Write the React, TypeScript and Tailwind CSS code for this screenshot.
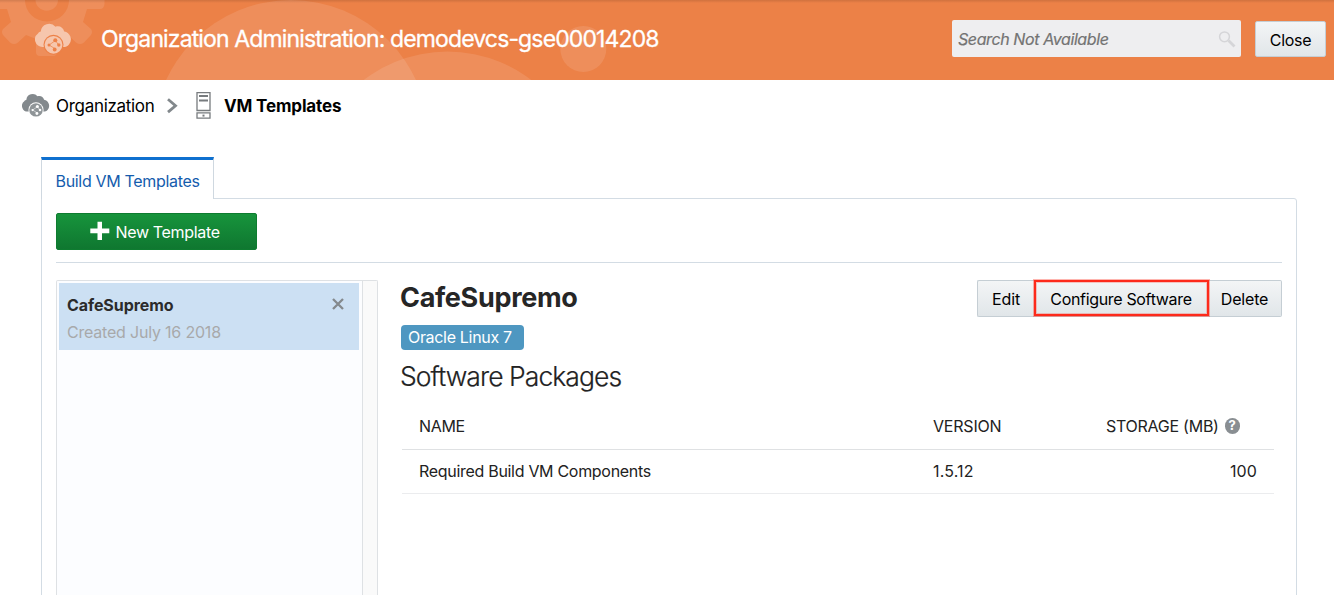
import type { ReactNode } from "react";

function HeaderArt() {
  return (
    <svg className="absolute inset-0" width="1334" height="80" viewBox="0 0 1334 80" aria-hidden="true">
      <g fill="#fff" fillOpacity="0.11">
        <circle cx="291" cy="137.6" r="137.6" />
        <circle cx="447.5" cy="189.1" r="137.6" />
        <circle cx="583.3" cy="49" r="23" />
        <path
          fillRule="evenodd"
          d="M-11 0V5Q-10 9 -6 9H7L11 22L3 29Q1 32 3 35L10 42.500Q14 45.500 18 42.500L26 35L36 39V52Q36 56 40 56H53Q57 56 57 52V39L68 35L76 42.500Q80 45.500 84 42.500L91 35Q93 32 91 29L83 22L87 9H100Q104 9 104.500 4V0H69A22 21.500 0 0 1 25 0ZM35.500 0A11 10.500 0 0 0 58 0Z"
        />
      </g>
    </svg>
  );
}

function CloudIcon({ className, cloud, ring, disc }: { className: string; cloud: string; ring: string; disc: string }) {
  return (
    <svg className={className} viewBox="0 0 37 32" aria-hidden="true">
      <path
        fill={cloud}
        d="M7.500 24A7.500 7.500 0 0 1 3 10.500C4 9 5 8.800 5.800 8.500A8.300 8.300 0 0 1 20.500 3.800C24.500 2.400 28.200 4.500 29.200 8.500A8 8 0 0 1 34 21.500C32.500 23.500 30.500 24 28.500 24Z"
      />
      <circle cx="18.500" cy="21.800" r="10" fill={ring} />
      <circle cx="18.500" cy="21.800" r="8.900" fill={disc} />
      <path stroke={ring} strokeWidth="0.700" fill="none" d="M14 22L20.500 17.500M14 22L20.500 26M20.500 17.500L23.500 22" />
      <g fill={ring}>
        <circle cx="14" cy="22" r="1.500" />
        <circle cx="20.300" cy="17.300" r="2" />
        <circle cx="19.700" cy="26.500" r="1.900" />
        <circle cx="23.800" cy="22" r="1.700" />
      </g>
    </svg>
  );
}

function Chevron() {
  return (
    <svg className="h-4 w-3" viewBox="0 0 12 16" fill="none" stroke="#82888c" strokeWidth="2.800" aria-hidden="true">
      <path d="M2 1.300L9.500 7.700L2 14.100" />
    </svg>
  );
}

function ServerIcon() {
  return (
    <svg className="h-7 w-[15px]" viewBox="0 0 15 28" fill="none" stroke="#777b7e" aria-hidden="true">
      <path strokeWidth="1.300" d="M1 .7H14V18.500H1ZM1 20.900H14V26.200H1Z" />
      <path strokeWidth="2" d="M3 4H12M3 8.500H12" />
      <path strokeWidth="2" d="M6.500 23.600H8.500" />
    </svg>
  );
}

function Th({ children, className }: { children: ReactNode; className?: string }) {
  return <th className={`h-[46px] border-b border-[#dfe1e3] p-0 pb-0.5 font-normal ${className ?? ""}`}>{children}</th>;
}

const buttonFace = "h-[37px] border border-[#c5ced4] bg-linear-to-b from-[#f3f5f6] to-[#e1e6e9] text-black";

export default function App() {
  return (
    <div className="h-[595px] w-[1334px] overflow-hidden bg-white font-['Inter',sans-serif] text-base text-[#222]">
      <header className="relative h-20 bg-[#ec8147]">
        <HeaderArt />
        <div className="absolute inset-x-0 top-0 h-[3px] bg-linear-to-b from-black/12 to-transparent" />
        <div className="relative flex h-full items-start">
          <CloudIcon className="mt-[23px] ml-[35px] h-8 w-[37px]" cloud="#f6c6ad" ring="#ed8148" disc="#f6c6ad" />
          <h1 className="mt-6 ml-[29px] text-[23px] leading-[30px] tracking-[-0.87px] whitespace-nowrap text-white [-webkit-text-stroke:0.3px_white]">
            Organization Administration: demodevcs-gse00014208
          </h1>
          <div className="mt-5 ml-auto flex h-[37px] w-[289px] items-center justify-between rounded-xs bg-[#eeeef0] pr-[5px] pl-[6px]">
            <span className="tracking-[-0.4px] text-[#737373] italic [-webkit-text-stroke:0.2px_#737373]">Search Not Available</span>
            <svg className="size-[18px]" viewBox="0 0 18 18" fill="none" stroke="#d5d5d8" aria-hidden="true">
              <circle cx="6.500" cy="6.800" r="4.900" strokeWidth="1.500" />
              <path strokeWidth="2.800" d="M10.500 10.500L16.500 16.500" />
            </svg>
          </div>
          <button className="mt-[21px] mr-2 ml-[14px] h-9 w-[71px] rounded-xs border border-[#c5ced4] bg-linear-to-b from-[#f3f5f6] to-[#e1e6e9] pt-0.5 tracking-[-0.28px] text-black">
            Close
          </button>
        </div>
      </header>

      <nav className="flex h-[51px] items-center pl-[22px] text-[17px] text-black">
        <CloudIcon className="h-[25px] w-7" cloud="#83898d" ring="#ffffff" disc="#8f9598" />
        <span className="ml-[6px] w-[110px] pt-0.5 tracking-[-0.3px]">Organization</span>
        <Chevron />
        <span className="ml-[18px]">
          <ServerIcon />
        </span>
        <span className="ml-[13px] pt-0.5 font-bold tracking-[-0.15px]">VM Templates</span>
      </nav>

      <main className="mt-[26px] mr-[37px] ml-[41px]">
        <div className="relative z-10 -mb-px flex h-[42px] w-[173px] items-center border-x border-t-3 border-x-[#cfd8e0] border-t-[#0f70cf] bg-white pl-[13.5px]">
          <span className="pt-0.5 tracking-[-0.32px] whitespace-nowrap text-[#145cad]">Build VM Templates</span>
        </div>
        <section className="h-[420px] rounded-tr-[3px] border border-[#d3dce4] px-[14px] pt-[14px]">
          <button className="flex h-[37px] w-[201px] items-center rounded-xs border border-[#0e7c30] bg-linear-to-b from-[#17943c] to-[#0f7730] pl-[33px] text-white">
            <svg className="-mt-0.5 size-5" viewBox="0 0 20 20" fill="#fff" aria-hidden="true">
              <path d="M7.500 .7H12V7.600H19.300V12.200H12V19H7.500V12.200H.3V7.600H7.500Z" />
            </svg>
            <span className="ml-[5.5px] tracking-[-0.33px]">New Template</span>
          </button>
          <div className="mt-3 border-t border-[#d3dce4]" />
          <div className="mt-[17px] flex h-80">
            <aside className="flex w-[322px] shrink-0 rounded-t-xs border-x border-t border-[#dee1e4] bg-[#fcfdff]">
              <div className="w-[305px] p-0.5">
                <div className="flex h-[67px] w-[300px] justify-between bg-[#cce0f3] pt-[10px] pr-[15px] pl-2">
                  <div className="leading-[27px]">
                    <div className="-mt-px font-bold tracking-[-0.08px] text-[#2b2b2b]">CafeSupremo</div>
                    <div className="tracking-[-0.2px] text-[#a8a9aa]">Created July 16 2018</div>
                  </div>
                  <svg className="mt-[5px] size-3" viewBox="0 0 12 12" fill="none" stroke="#84898d" strokeWidth="2.300" aria-hidden="true">
                    <path d="M1 1L11 11M11 1L1 11" />
                  </svg>
                </div>
              </div>
              <div className="flex-1 border-l border-[#dee1e4] bg-[#fafafa]" />
            </aside>
            <div className="ml-[23px] flex-1">
              <div className="flex h-[45px] items-start justify-between">
                <h2 className="-ml-px text-[27px] leading-[35px] font-bold tracking-[-0.32px] text-[#262626]">CafeSupremo</h2>
                <div className="flex">
                  <button className={`${buttonFace} w-[57px] rounded-l-xs border-r-0`}>
                    <span className="tracking-[-0.1px]">Edit</span>
                  </button>
                  <button className={`${buttonFace} relative w-[174px] border-x-0`}>
                    <span className="tracking-[-0.33px]">Configure Software</span>
                    <span className="absolute -top-px right-0 -bottom-px left-0 -mr-px border-2 border-[#fd2a1b] shadow-[0_0_0_1px_rgba(253,42,27,0.35),inset_0_0_0_1px_rgba(253,42,27,0.25)] h-9" />
                  </button>
                  <button className={`${buttonFace} w-[74px] rounded-r-xs border-l-0`}>
                    <span className="tracking-[-0.17px]">Delete</span>
                  </button>
                </div>
              </div>
              <div className="flex h-[25px] w-[123px] items-center rounded-[4px] bg-[#4e97c1] pb-0.5 pl-[7px] tracking-[-0.32px] text-white">
                Oracle Linux 7
              </div>
              <h3 className="mt-[9px] -ml-px text-[26.5px] leading-[35px] font-light tracking-[-0.93px] [-webkit-text-stroke:0.2px_#222]">
                Software Packages
              </h3>
              <table className="mt-[10px] ml-px w-[872px] table-fixed border-separate border-spacing-0 text-left">
                <colgroup>
                  <col className="w-[514px]" />
                  <col className="w-[190px]" />
                  <col />
                </colgroup>
                <thead>
                  <tr>
                    <Th className="pl-[17px] tracking-[-0.35px]">NAME</Th>
                    <Th className="pl-[17px] tracking-[-0.2px]">VERSION</Th>
                    <Th>
                      <div className="flex items-center justify-end gap-[6px] pr-[34.5px] tracking-[-0.26px] whitespace-nowrap">
                        STORAGE (MB)
                        <span className="flex size-4 items-center justify-center rounded-full bg-[#898e92] text-[13px] font-bold tracking-normal text-white">
                          ?
                        </span>
                      </div>
                    </Th>
                  </tr>
                </thead>
                <tbody>
                  <tr>
                    <td className="h-11 border-b border-[#ebecee] p-0 pb-0.5 pl-[17px] tracking-[-0.3px]">Required Build VM Components</td>
                    <td className="h-11 border-b border-[#ebecee] p-0 pb-0.5 pl-[17px] tracking-[0.15px]">1.5.12</td>
                    <td className="h-11 border-b border-[#ebecee] p-0 pr-[17px] pb-0.5 text-right tracking-[0.1px]">100</td>
                  </tr>
                </tbody>
              </table>
            </div>
          </div>
        </section>
      </main>
    </div>
  );
}
